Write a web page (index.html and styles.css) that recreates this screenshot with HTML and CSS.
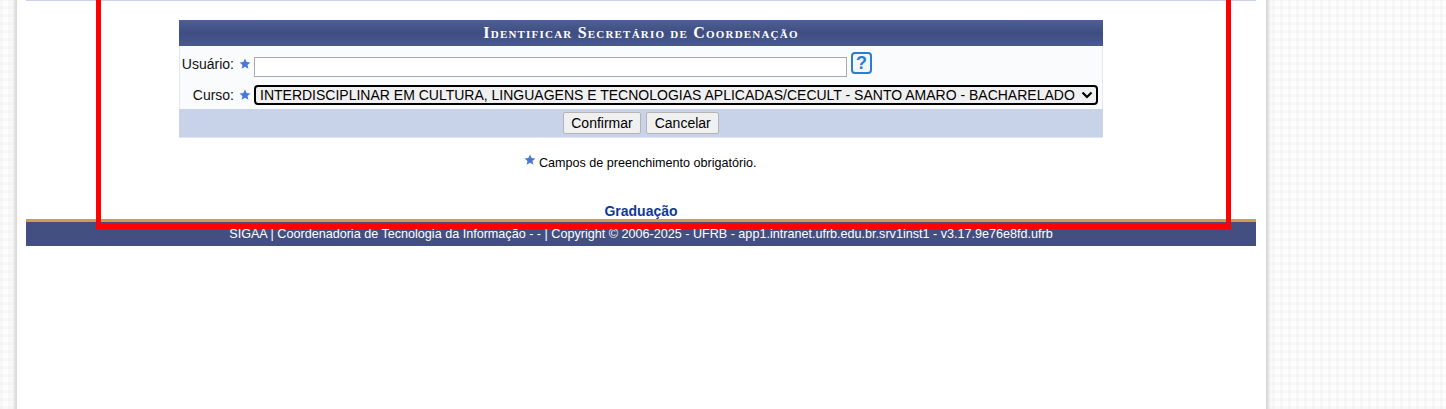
FILE: index.html
```html
<!DOCTYPE html>
<html lang="pt-BR">

<head>
    <meta charset="UTF-8">
    <title>SIGAA - Identificar Secretário de Coordenação</title>
    <link rel="stylesheet" href="styles.css">
</head>

<body>
<div class="page">
    <div class="content">
        <!-- formulario -->
        <form class="form-box">
            <div class="form-title">Identificar Secretário de Coordenação</div>
            <div class="form-body">
                <div class="row row-user">
                    <label class="field-label">Usuário:</label>
                    <svg class="star" viewBox="0 0 12 12"><path d="M6 .6l1.6 3.5 3.8.4-2.9 2.5.9 3.8L6 8.8l-3.4 2 .9-3.8L.6 4.5l3.8-.4z"/></svg>
                    <input class="text-input" type="text">
                    <a class="help" href="#">?</a>
                </div>
                <div class="row row-course">
                    <label class="field-label">Curso:</label>
                    <svg class="star" viewBox="0 0 12 12"><path d="M6 .6l1.6 3.5 3.8.4-2.9 2.5.9 3.8L6 8.8l-3.4 2 .9-3.8L.6 4.5l3.8-.4z"/></svg>
                    <div class="select-wrap">
                        <select class="course-select">
                            <option>INTERDISCIPLINAR EM CULTURA, LINGUAGENS E TECNOLOGIAS APLICADAS/CECULT - SANTO AMARO - BACHARELADO</option>
                        </select>
                        <svg class="select-arrow" viewBox="0 0 12 8"><path d="M1.5 1.5L6 6l4.500-4.500"/></svg>
                    </div>
                </div>
            </div>
            <div class="form-foot">
                <button class="btn" type="button">Confirmar</button>
                <button class="btn" type="button">Cancelar</button>
            </div>
        </form>

        <p class="required-note">
            <svg class="star star-note" viewBox="0 0 12 12"><path d="M6 .6l1.6 3.5 3.8.4-2.9 2.5.9 3.8L6 8.8l-3.4 2 .9-3.8L.6 4.5l3.8-.4z"/></svg>
            Campos de preenchimento obrigatório.
        </p>

        <a class="module-link" href="#">Graduação</a>

        <div class="footer">SIGAA | Coordenadoria de Tecnologia da Informação - - | Copyright © 2006-2025 - UFRB - app1.intranet.ufrb.edu.br.srv1inst1 - v3.17.9e76e8fd.ufrb</div>
    </div>
</div>

<!-- marcacao vermelha sobre a tela -->
<div class="red-mark"></div>
</body>

</html>
```

FILE: styles.css
```css
* {
    padding: 0;
    margin: 0;
    box-sizing: border-box;
}

html,
body {
    height: 100%;
    overflow: hidden;
}

body {
    position: relative;
    font-family: "Liberation Sans", Arial, sans-serif;
    background-color: #fdfdfd;
    background-image:
        repeating-linear-gradient(90deg, rgba(0, 0, 0, .018) 0, rgba(0, 0, 0, .018) 3px, transparent 3px, transparent 8px),
        repeating-linear-gradient(0deg, rgba(0, 0, 0, .018) 0, rgba(0, 0, 0, .018) 3px, transparent 3px, transparent 8px);
}

a {
    text-decoration: none;
}

.page {
    width: 1249px;
    height: 100%;
    margin-left: 17px;
    padding: 0 10px 0 9px;
    background-color: #fff;
    box-shadow: 0 0 3px 3px #d8d8d8;
}

.content {
    width: 1230px;
    border-top: 1px solid #c8d3ea;
}

.form-box {
    display: block;
    width: 924px;
    margin: 19px auto 0 auto;
}

.form-title {
    height: 26px;
    line-height: 26px;
    text-align: center;
    color: #fff;
    font-family: "Liberation Serif", serif;
    font-size: 16px;
    font-weight: bold;
    font-variant: small-caps;
    letter-spacing: 1.2px;
    background: linear-gradient(#4e5f93 0, #3f4e82 50%, #4a5a8e 100%);
}

.form-body {
    height: 63px;
    background-color: #f9fbfd;
    border-left: 1px solid #e4e8f2;
    border-right: 1px solid #e4e8f2;
}

.row {
    display: flex;
    align-items: center;
}

.row-user {
    height: 38px;
}

.row-user .field-label,
.row-user .star {
    margin-top: -2px;
}

.row-course {
    height: 22px;
}

.field-label {
    width: 54px;
    text-align: right;
    font-size: 14px;
    color: #111;
}

.star {
    width: 12px;
    height: 12px;
    margin: 0 3px 0 5px;
    fill: #4a78d8;
}

.text-input {
    width: 593px;
    height: 20px;
    margin-top: 4px;
    border: 1px solid #a9a9a9;
    background: #fff;
}

.help {
    width: 21px;
    height: 22px;
    margin: -5px 0 0 4px;
    border: 2px solid #2e7ccb;
    border-radius: 4px;
    background: #f2f7fc;
    color: #2e7ccb;
    font-size: 18px;
    font-weight: bold;
    line-height: 18px;
    text-align: center;
}

.select-wrap {
    position: relative;
    width: 844px;
    height: 20px;
}

.course-select {
    display: block;
    width: 100%;
    height: 100%;
    padding-left: 4px;
    border: 2px solid #000;
    border-radius: 4px;
    background-color: #f0f0f0;
    color: #000;
    font-family: "Liberation Sans", Arial, sans-serif;
    font-size: 14px;
    appearance: none;
}

.select-arrow {
    position: absolute;
    top: 6px;
    right: 5px;
    width: 12px;
    height: 8px;
    fill: none;
    stroke: #000;
    stroke-width: 2.2;
}

.form-foot {
    display: flex;
    justify-content: center;
    align-items: center;
    gap: 5px;
    height: 29px;
    background-color: #c8d3ea;
    border-bottom: 1px solid #dfe5f2;
}

.btn {
    height: 22px;
    padding: 0 7.500px;
    border: 1px solid #b5b5b5;
    border-radius: 2px;
    background-color: #f0f0f0;
    color: #000;
    font-family: "Liberation Sans", Arial, sans-serif;
    font-size: 14px;
}

.required-note {
    margin-top: 16px;
    text-align: center;
    font-size: 12.6px;
    line-height: 18px;
    color: #000;
}

.star-note {
    margin: 0 -1px 8px -1px;
    vertical-align: middle;
}

.module-link {
    display: block;
    margin-top: 29px;
    text-align: center;
    font-size: 14px;
    font-weight: bold;
    line-height: 16px;
    color: #0f3a96;
}

.footer {
    height: 27px;
    border-top: 3px solid #d59a4c;
    background-color: #434f81;
    color: #fff;
    font-size: 12.6px;
    line-height: 24px;
    text-align: center;
}

.red-mark {
    position: absolute;
    left: 96px;
    top: -10px;
    width: 1135px;
    height: 239px;
    border: 5px solid #f00;
}
```
